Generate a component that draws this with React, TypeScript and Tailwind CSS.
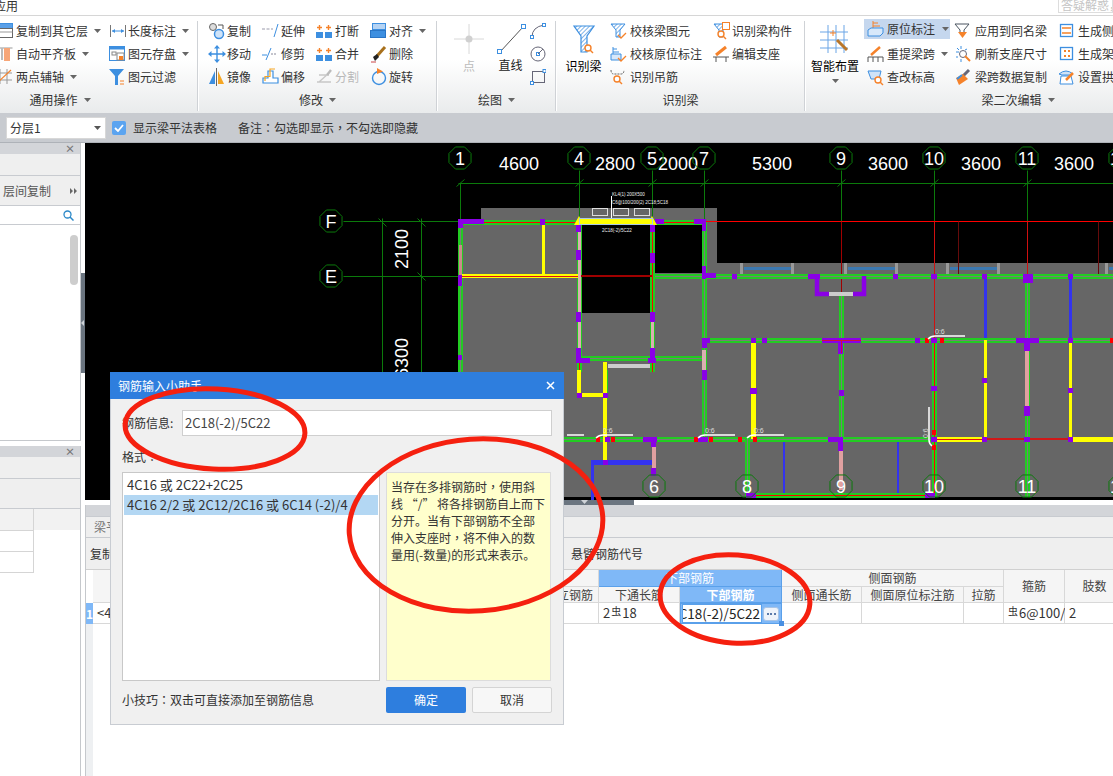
import React from "react";

const B = "#3d8fe0";
const O = "#f5822a";

const S = ({ children, w = 18, h = 18 }: { children: React.ReactNode; w?: number; h?: number }) => (
  <svg width={w} height={h} viewBox={`0 0 ${w} ${h}`} fill="none" className="block shrink-0">
    {children}
  </svg>
);

const Caret = ({ c = "#666" }: { c?: string }) => (
  <svg width="7" height="4" viewBox="0 0 7 4" className="block shrink-0">
    <path d="M0 0H7L3.5 4Z" fill={c} />
  </svg>
);

const P = ({ c }: { c: string }) => <span className="font-['Noto_Sans_CJK_TC']">{c}</span>;

const Funnel = ({ id, small }: { id: string; small?: boolean }) => (
  <>
    <defs>
      <pattern id={id} width="3" height="3" patternUnits="userSpaceOnUse" patternTransform="rotate(-45)">
        <rect width="3" height="3" fill="#fff" />
        <rect width="3" height="1" fill="#7fb2e8" />
      </pattern>
    </defs>
    {small ? (
      <path d="M1 2H15L10 8V15H6V8Z" fill={`url(#${id})`} stroke={B} />
    ) : (
      <path d="M1 1H21L14 11V27H8V11Z" fill={`url(#${id})`} stroke={B} strokeWidth="1.2" />
    )}
  </>
);

const Mag = ({ x, y }: { x: number; y: number }) => (
  <g stroke={O} strokeWidth="1.4">
    <circle cx={x} cy={y} r="3" fill="#fff" />
    <path d={`M${x + 2} ${y + 2}L${x + 5} ${y + 5}`} />
  </g>
);

const Icons: Record<string, React.ReactNode> = {
  copyLayer: (
    <S>
      <rect x="0.5" y="1.5" width="16" height="5" fill="#5aa0e8" stroke={B} />
      <rect x="0.5" y="6.5" width="16" height="9" fill="#fff" stroke="#666" />
      <rect x="0.5" y="9.5" width="16" height="1" fill="#999" />
    </S>
  ),
  align: (
    <S>
      <rect x="0.5" y="2.5" width="16" height="1" fill="#999" />
      <rect x="0.5" y="3" width="3" height="12" fill="#fff" stroke="#777" />
      <rect x="5" y="3" width="2" height="12" fill="#bbb" />
      <rect x="8" y="3" width="6" height="13" fill="#f7a678" />
    </S>
  ),
  axis: (
    <S>
      <path d="M4 1V16M11 1V16M0 5H16M0 12H16" stroke="#999" />
      <path d="M0 16L15 2" stroke={O} strokeWidth="1.2" />
    </S>
  ),
  len: (
    <S>
      <path d="M1.5 3V15M16.5 3V15" stroke="#777" />
      <path d="M3 9H15" stroke={B} />
      <path d="M3 9L6 7V11ZM15 9L12 7V11Z" fill={B} />
    </S>
  ),
  save: (
    <S>
      <rect x="0.5" y="1.5" width="15" height="14" fill="#fff" stroke={B} />
      <rect x="0.5" y="1.5" width="15" height="3" fill={B} />
      <rect x="3" y="7" width="4" height="3" fill="none" stroke="#888" />
      <rect x="8" y="8" width="7" height="7" fill="#fff" stroke="#888" />
      <rect x="10" y="11" width="4" height="4" fill={O} />
    </S>
  ),
  filter: (
    <S>
      <path d="M0 1H15L9 8V17H6V8Z" fill={B} />
      <path d="M11 13H15M11 16H15" stroke={O} strokeWidth="1.2" />
    </S>
  ),
  copy: (
    <S>
      <circle cx="5" cy="5" r="3.5" fill="#ddd" stroke="#666" />
      <circle cx="11" cy="12" r="4.5" fill="#cfe3f8" stroke={B} strokeWidth="1.5" />
      <path d="M10 3H15V7" stroke="#555" />
    </S>
  ),
  extend: (
    <S>
      <path d="M0 7H11" stroke="#99a" strokeDasharray="3 1.5" />
      <path d="M12 15L16 2" stroke={B} />
    </S>
  ),
  brk: (
    <S>
      <rect x="0" y="10" width="7" height="6" fill={B} />
      <rect x="9" y="10" width="7" height="6" fill={B} />
      <path d="M3.5 3V8M1 5.500H6M12.500 3V8M10 5.500H15" stroke={O} strokeWidth="1.4" />
    </S>
  ),
  alignR: (
    <S>
      <rect x="2.500" y="1.500" width="13" height="6" fill="#b5d3f3" stroke={B} />
      <rect x="0.500" y="8.500" width="15" height="7" fill={B} stroke="#2a75c5" />
    </S>
  ),
  move: (
    <S>
      <path d="M2 9H16M9 2V16" stroke={B} strokeWidth="1.4" />
      <path d="M9 0L12 3.500H6ZM9 18L12 14.500H6ZM0 9L3.500 6V12ZM18 9L14.500 6V12Z" fill={B} />
    </S>
  ),
  trim: (
    <S>
      <path d="M0 10H5" stroke={B} />
      <path d="M9 9H15" stroke="#889" strokeDasharray="2 1" />
      <path d="M4 15L9 3" stroke={B} />
    </S>
  ),
  del: (
    <S>
      <path d="M7 11L15 2" stroke="#a8701c" strokeWidth="3" />
      <path d="M3 12L7 9L9 12L5 16Z" fill="#222" />
      <path d="M1 17H6" stroke="#c44" />
    </S>
  ),
  mirror: (
    <S>
      <path d="M7 3V16H1Z" fill={B} />
      <path d="M10 3V16H16Z" fill="#f5a623" />
      <path d="M8.500 0V18" stroke="#666" />
    </S>
  ),
  offset: (
    <S>
      <path d="M1 15V10H6V3H11V10H16V15Z" fill="#fff" stroke={B} strokeWidth="1.2" />
      <path d="M3 13V8.500H8V1H13" stroke="#f5a623" strokeWidth="1.2" />
    </S>
  ),
  split: (
    <S>
      <path d="M1 14L15 14M3 14L13 5M3 7H13" stroke="#c8c8c8" strokeWidth="1.4" />
      <path d="M11 7L15 2" stroke="#bbb" strokeWidth="2.400" />
    </S>
  ),
  rotate: (
    <S>
      <circle cx="9" cy="10" r="6.500" stroke={B} strokeWidth="1.4" />
      <path d="M7 0L13 3.500L7 6Z" fill={O} />
    </S>
  ),
  check1: (
    <S>
      <Funnel id="h1" small />
      <path d="M8 13L11 16L16 11" stroke={O} strokeWidth="1.300" />
    </S>
  ),
  check2: (
    <S>
      <path d="M1 15V9H11V15ZM3 9V2M3 4H7M3 7H9" stroke={B} fill="#d7e8fa" />
      <path d="M8 13L11 16L16 11" stroke={O} strokeWidth="1.300" />
    </S>
  ),
  hang: (
    <S>
      <path d="M1 2Q1 6 4 6H11Q14 6 14 2" stroke="#666" strokeDasharray="2 1" />
      <Mag x={7} y={11} />
    </S>
  ),
  part: (
    <S>
      <Funnel id="h2" small />
      <rect x="9.500" y="0.500" width="7" height="7" fill="#fff" stroke={O} />
      <Mag x={8} y={12} />
    </S>
  ),
  seat: (
    <S>
      <path d="M0 12H16M3 12V17M13 12V17" stroke="#555" />
      <path d="M3 10L13 2" stroke={O} strokeWidth="3" />
    </S>
  ),
  origin: (
    <S>
      <path d="M6 1V9M6 3H11M6 6H13" stroke={O} />
      <path d="M1 10L4 8H16V13L13 16H1Z" fill="#d7e8fa" stroke={B} />
    </S>
  ),
  retake: (
    <S>
      <path d="M1 17V12H16V17M6 12V17M11 12V17" stroke="#555" />
      <path d="M4 10L13 2" stroke={O} strokeWidth="2.500" />
    </S>
  ),
  elev: (
    <S>
      <path d="M1 3H14L12 11H4Z" fill="#cfe3f8" stroke={B} />
      <Mag x={11} y={12} />
    </S>
  ),
  same: (
    <S>
      <path d="M1 2H15L10 8V11H6V8Z" fill="#fff" stroke="#4a5560" />
      <path d="M4 10H13L8.500 16Z" fill={O} />
    </S>
  ),
  refresh: (
    <S>
      <path d="M7 1V4M2 7H5M3 3L5 5M13 4L11 5M7 14V17M2 12H4" stroke={B} />
      <circle cx="9" cy="9" r="3.500" fill="#fff" stroke="#667" />
      <path d="M11 11L16 16" stroke={O} strokeWidth="2" />
    </S>
  ),
  span: (
    <S>
      <path d="M9 8L15 2" stroke="#667" strokeWidth="3" />
      <path d="M2 10L9 6L14 11L5 17Z" fill={O} />
      <path d="M3 11L8 7" stroke={B} strokeWidth="2" />
    </S>
  ),
  gen1: (
    <S>
      <rect x="1.500" y="2.500" width="12" height="12" fill="#fff" stroke={B} strokeWidth="1.300" />
      <path d="M3 6H12M3 11H12" stroke={O} strokeWidth="1.300" />
    </S>
  ),
  gen2: (
    <S>
      <rect x="1.500" y="2.500" width="12" height="12" fill="#fff" stroke={B} strokeWidth="1.300" />
      <path d="M5 5H7V7H5ZM9 5H11V7H9ZM5 10H7V12H5ZM9 10H11V12H9Z" fill={O} />
    </S>
  ),
  phone: (
    <S>
      <path d="M0 6Q7 0 14 6L11 7H3Z" fill="#cfe3f8" stroke={B} />
      <path d="M2 8H12L14 16H1Z" fill="#fff" stroke={B} />
      <path d="M7 12L14 5" stroke={O} strokeWidth="2.500" />
    </S>
  ),
};

const Item = ({
  icon,
  label,
  arrow,
  iw = "w-[19px]",
  gray,
}: {
  icon: string;
  label: string;
  arrow?: boolean;
  iw?: string;
  gray?: boolean;
}) => (
  <div className="flex h-[23px] items-center whitespace-nowrap">
    <div className={`${iw} shrink-0`}>{Icons[icon]}</div>
    <span className={gray ? "text-[#b9b9b9]" : "text-[#333]"}>{label}</span>
    {arrow && (
      <span className="ml-[6px]">
        <Caret />
      </span>
    )}
  </div>
);

const GroupLabel = ({ label, arrow, cls = "" }: { label: string; arrow?: boolean; cls?: string }) => (
  <div className={`flex h-[24px] items-center justify-center gap-[6px] text-[#333] ${cls}`}>
    <span>{label}</span>
    {arrow && <Caret />}
  </div>
);

const Sep = () => <div className="my-[2px] w-[2px] shrink-0 border-l border-[#cfd2d6] bg-white" />;

const Ribbon = () => (
  <div className="flex h-[97px] shrink-0 overflow-hidden bg-linear-to-b from-white from-45% to-[#e9ebec] pt-[3px] text-[12px] shadow-[0_1px_2px_rgba(0,0,0,0.35)]">
    <div className="flex w-[197px] shrink-0 flex-col">
      <div className="-ml-[4px] flex h-[69px]">
        <div className="w-[113px]">
          <Item icon="copyLayer" iw="w-[20px]" label="复制到其它层" arrow />
          <Item icon="align" iw="w-[20px]" label="自动平齐板" arrow />
          <Item icon="axis" iw="w-[20px]" label="两点辅轴" arrow />
        </div>
        <div>
          <Item icon="len" label="长度标注" arrow />
          <Item icon="save" label="图元存盘" arrow />
          <Item icon="filter" label="图元过滤" />
        </div>
      </div>
      <GroupLabel label="通用操作" arrow cls="pr-[77px]" />
    </div>
    <Sep />
    <div className="flex w-[237px] shrink-0 flex-col">
      <div className="flex h-[69px] pl-[9px]">
        <div className="w-[54px]">
          <Item icon="copy" label="复制" />
          <Item icon="move" label="移动" />
          <Item icon="mirror" label="镜像" />
        </div>
        <div className="w-[54px]">
          <Item icon="extend" label="延伸" />
          <Item icon="trim" label="修剪" />
          <Item icon="offset" label="偏移" />
        </div>
        <div className="w-[54px]">
          <Item icon="brk" label="打断" />
          <Item icon="brk" label="合并" />
          <Item icon="split" label="分割" gray />
        </div>
        <div>
          <Item icon="alignR" label="对齐" arrow />
          <Item icon="del" label="删除" />
          <Item icon="rotate" label="旋转" />
        </div>
      </div>
      <GroupLabel label="修改" arrow />
    </div>
    <Sep />
    <div className="flex w-[117px] shrink-0 flex-col">
      <div className="flex h-[69px] pl-[9px]">
        <div className="flex w-[44px] flex-col items-center pt-[5px]">
          <S w={30} h={32}>
            <path d="M15 0V30M0 15H30" stroke="#d8d8d8" />
            <circle cx="15" cy="15" r="3.500" fill="#d0d0d0" />
          </S>
          <span className="mt-[3px] leading-[14px] text-[#bbb]">点</span>
        </div>
        <div className="flex w-[39px] flex-col items-center pt-[3px]">
          <S w={30} h={32}>
            <path d="M4 30L27 5" stroke="#555" />
            <rect x="1.500" y="27.500" width="4" height="4" fill="#fff" stroke={B} />
            <rect x="25.500" y="2.500" width="4" height="4" fill="#fff" stroke={B} />
          </S>
          <span className="mt-[4px] leading-[14px] text-[#222]">直线</span>
        </div>
        <div className="flex flex-col">
          <div className="flex h-[23px] items-center">
            <S w={16} h={16}>
              <path d="M2 14Q2 4 14 2" stroke="#667" />
              <rect x="0.500" y="12.500" width="3" height="3" fill="#fff" stroke={B} />
              <rect x="12.500" y="0.500" width="3" height="3" fill="#fff" stroke={B} />
            </S>
          </div>
          <div className="flex h-[23px] items-center">
            <S w={16} h={16}>
              <circle cx="8" cy="8" r="7" stroke="#667" />
              <rect x="6.500" y="6.500" width="3" height="3" fill="#fff" stroke={B} />
              <path d="M8 8L13 3" stroke="#667" />
            </S>
          </div>
          <div className="flex h-[23px] items-center">
            <S w={16} h={16}>
              <rect x="2.500" y="2.500" width="12" height="11" stroke="#667" />
              <rect x="0.500" y="12.500" width="3" height="3" fill="#fff" stroke={B} />
              <rect x="13" y="0.500" width="3" height="3" fill="#fff" stroke={B} />
            </S>
          </div>
        </div>
      </div>
      <GroupLabel label="绘图" arrow />
    </div>
    <Sep />
    <div className="flex w-[247px] shrink-0 flex-col">
      <div className="flex h-[69px]">
        <div className="flex w-[53px] flex-col items-center pt-[6px]">
          <S w={26} h={30}>
            <g transform="translate(2,0)">
              <Funnel id="h3" />
            </g>
            <Mag x={17} y={23} />
          </S>
          <span className="mt-[4px] leading-[14px]">识别梁</span>
        </div>
        <div className="w-[103px]">
          <Item icon="check1" iw="w-[20px]" label="校核梁图元" />
          <Item icon="check2" iw="w-[20px]" label="校核原位标注" />
          <Item icon="hang" iw="w-[20px]" label="识别吊筋" />
        </div>
        <div>
          <Item icon="part" label="识别梁构件" />
          <Item icon="seat" label="编辑支座" />
        </div>
      </div>
      <GroupLabel label="识别梁" />
    </div>
    <Sep />
    <div className="flex w-[424px] shrink-0 flex-col">
      <div className="flex h-[69px]">
        <div className="flex w-[58px] flex-col items-center pt-[6px]">
          <S w={30} h={30}>
            <path d="M0 7H28M0 15H28M0 23H28M8 0V28M16 0V28M24 0V28" stroke="#6aa5e6" />
            <path d="M17 15L27 25" stroke="#b9762a" strokeWidth="3" />
            <path d="M10 8H16M13 5V11" stroke={O} />
          </S>
          <span className="mt-[4px] leading-[14px] whitespace-nowrap">智能布置</span>
          <span className="mt-[6px]">
            <Caret />
          </span>
        </div>
        <div className="w-[90px]">
          <div className="flex h-[20px] w-[86px] items-center bg-[#c5d7ee] pl-[3px] whitespace-nowrap">
            <div className="w-[20px] shrink-0">{Icons.origin}</div>
            <span className="text-[#333]">原位标注</span>
            <span className="ml-[7px]">
              <Caret />
            </span>
          </div>
          <div className="mt-[3px] pl-[3px]">
            <Item icon="retake" iw="w-[20px]" label="重提梁跨" arrow />
            <Item icon="elev" iw="w-[20px]" label="查改标高" />
          </div>
        </div>
        <div className="w-[105px]">
          <Item icon="same" iw="w-[21px]" label="应用到同名梁" />
          <Item icon="refresh" iw="w-[21px]" label="刷新支座尺寸" />
          <Item icon="span" iw="w-[21px]" label="梁跨数据复制" />
        </div>
        <div className="w-[120px]">
          <Item icon="gen1" label="生成侧面钢筋" />
          <Item icon="gen2" label="生成架立钢筋" />
          <Item icon="phone" label="设置拱梁" />
        </div>
      </div>
      <GroupLabel label="梁二次编辑" arrow />
    </div>
  </div>
);

/* ---------- CAD drawing ---------- */
const GD = "#0b7a0b";
const PUR = "#8a00e6";

type L = [number, number, number, number];
const bar = (a: L, c: string, w: number, k: string) => {
  const off = Math.floor(w / 2);
  return a[1] === a[3] ? (
    <rect key={k} x={a[0]} y={a[1] - off} width={a[2] - a[0]} height={w} fill={c} />
  ) : (
    <rect key={k} x={a[0] - off} y={a[1]} width={w} height={a[3] - a[1]} fill={c} />
  );
};
const beam = (a: L, red: boolean, k: string) => (
  <g key={k}>
    {bar(a, "#22cc22", 5, "o")}
    {bar(a, red ? "#f00" : "#7a7a7a", 1, "i")}
  </g>
);
const seg = bar;

const greenBeams: [L, boolean][] = [
  [[458, 222, 579, 222], true],
  [[652, 222, 704, 222], true],
  [[652, 276, 704, 276], false],
  [[460, 222, 460, 372], false],
  [[579, 222, 579, 372], true],
  [[652, 222, 652, 372], true],
  [[704, 222, 704, 440], false],
  [[704, 276, 1113, 276], false],
  [[704, 340, 1113, 340], false],
  [[579, 358, 704, 358], false],
  [[564, 439, 934, 439], false],
  [[841, 296, 841, 439], false],
  [[934, 340, 934, 497], true],
  [[1027, 280, 1027, 497], false],
  [[747, 439, 747, 497], false],
  [[750, 495, 934, 495], true],
  [[605, 370, 605, 400], false],
];
const purple: [number, number, number, number][] = [
  [458, 219, 26, 5], [458, 219, 5, 9], [458, 275, 4, 11], [458, 355, 4, 5], [540, 219, 5, 6],
  [576, 224, 5, 8], [576, 250, 5, 10], [576, 312, 5, 10], [576, 348, 5, 14], [576, 358, 14, 5],
  [650, 224, 5, 8], [650, 253, 5, 10], [650, 312, 5, 10], [648, 358, 8, 5], [650, 348, 5, 10],
  [655, 219, 9, 5], [694, 219, 12, 5], [702, 222, 4, 9], [702, 266, 4, 13], [702, 273, 14, 5],
  [702, 338, 8, 5], [702, 338, 5, 10], [702, 370, 5, 10], [732, 274, 5, 5], [808, 274, 12, 5],
  [893, 274, 5, 5], [931, 274, 6, 5], [982, 274, 5, 5], [1023, 274, 10, 9], [1068, 274, 5, 5],
  [751, 338, 5, 5], [762, 338, 5, 5], [822, 338, 39, 5], [838, 338, 5, 16], [839, 390, 5, 6],
  [915, 338, 5, 5], [931, 338, 6, 5], [931, 386, 6, 5], [1016, 338, 23, 5], [1024, 338, 6, 13],
  [1024, 406, 6, 10], [982, 378, 5, 5], [1068, 338, 5, 5], [1068, 388, 5, 5], [750, 388, 7, 6],
  [828, 437, 15, 5], [838, 437, 5, 14], [931, 437, 6, 5], [982, 437, 5, 5], [1024, 437, 6, 5],
  [1068, 437, 5, 5], [643, 437, 14, 5], [651, 437, 5, 10], [651, 468, 5, 8], [698, 437, 10, 5],
  [605, 437, 5, 5], [603, 460, 5, 5], [577, 393, 5, 5], [603, 393, 5, 5], [746, 493, 10, 5], [925, 493, 10, 5],
];
const redSq: [number, number][] = [
  [598, 439], [613, 439], [696, 439], [711, 439], [740, 439], [755, 439], [927, 340], [942, 340], [934, 432], [934, 447], [1112, 340],
];
const Octa = ({ x, y, t }: { x: number; y: number; t: string }) => {
  const r = 12;
  const a = r * 0.92;
  const b = r * 0.38;
  return (
    <g>
      <polygon
        points={`${x - b},${y - a} ${x + b},${y - a} ${x + a},${y - b} ${x + a},${y + b} ${x + b},${y + a} ${x - b},${y + a} ${x - a},${y + b} ${x - a},${y - b}`}
        fill="none"
        stroke={GD}
      />
      <text x={x} y={y + 6.500} textAnchor="middle" fontSize="18" fill="#fff" fontFamily="'Liberation Sans', sans-serif">
        {t}
      </text>
    </g>
  );
};
const Lbl = ({ x, y }: { x: number; y: number }) => (
  <g>
    <path d={`M${x - 5} ${y + 3}Q${x - 2} ${y} ${x + 2} ${y}H${x + 32}`} stroke="#fff" strokeWidth="1.500" fill="none" />
    <text x={x + 2} y={y - 2} fontSize="7" fill="#ddd" fontFamily="'Liberation Sans', sans-serif">
      0:6
    </text>
  </g>
);

const Cad = () => (
  <svg width="1028" height="357" viewBox="85 143 1028 357" className="block shrink-0 bg-black">
    <path d="M481 208H717V263H1113V497H458V221H481Z" fill="#666" />
    <rect x="582" y="224" width="69" height="89" fill="#000" />
    <rect x="655" y="224" width="47" height="49" fill="#000" />
    {[844, 948, 1050].map((x) => (
      <g key={x}>
        <rect x={x - 104} y="263" width="3" height="11" fill="#999" />
        <rect x={x - 53} y="263" width="3" height="11" fill="#999" />
        <rect x={x - 100} y="267" width="47" height="3" fill="#3b78b0" />
      </g>
    ))}
    <rect x="1105" y="263" width="3" height="11" fill="#999" />
    <rect x="1109" y="267" width="4" height="3" fill="#3b78b0" />
    <g transform="translate(0.5,0.5)">
      <path d="M460 183V222M579 170V222M652 170V222M704 170V222M841 170V221M934 170V221M1027 170V221" stroke={GD} />
      <path d="M458 183H1113" stroke={GD} />
      <path d="M343 221H460M343 276H460" stroke={GD} />
      <path d="M382 218V375M421 218V375" stroke={GD} />
      <path d="M378 218L386 226M417 218L425 226M417 272L425 280M456 186L464 179M575 186L583 179M648 186L656 179M700 186L708 179M837 186L845 179M930 186L938 179M1023 186L1031 179" stroke={GD} />
      <path d="M704 221H1113" stroke="#f00" />
      <path d="M841 221V296" stroke="#a00000" />
      <path d="M934 221V340M1027 221V274" stroke="#d01010" />
      <path d="M958 221V275M1098 221V275" stroke="#660b0b" />
    </g>

    {[985, 1070].map((x) => seg([x, 276, x, 340], "#3333ee", 3, `b${x}`))}
    {[784, 898].map((x) => seg([x, 439, x, 497], "#3333ee", 2, `c${x}`))}
    {greenBeams.map((b, i) => beam(b[0], b[1], `g${i}`))}
    {seg([579, 276, 652, 276], "#a00000", 2, "dr")}
    {seg([460, 276, 579, 276], "#ffff00", 4, "y1")}
    {seg([460, 276, 579, 276], "#e01010", 1, "y1r")}
    {seg([543, 222, 543, 276], "#ffff00", 3, "y2")}
    {seg([753, 340, 753, 439], "#ffff00", 5, "y3")}
    {seg([985, 340, 985, 439], "#ffff00", 3, "y4")}
    {seg([1070, 340, 1070, 439], "#ffff00", 3, "y5")}
    {seg([934, 439, 985, 439], "#ffff00", 5, "y6")}
    {seg([1072, 439, 1113, 439], "#ffff00", 5, "y7")}
    {seg([985, 439, 1072, 439], "#d01818", 2, "y8")}
    {seg([934, 439, 985, 439], "#e01010", 1, "y9")}
    {seg([579, 370, 579, 395], "#ffff00", 4, "y10")}
    {seg([579, 395, 605, 395], "#ffff00", 4, "y11")}
    {seg([605, 362, 605, 462], "#ffff00", 4, "y12")}
    {seg([591, 462, 654, 462], "#3333ee", 5, "bl")}
    {seg([592, 462, 592, 500], "#3333ee", 3, "bl2")}
    {seg([460, 245, 460, 275], "#c98a8a", 3, "pk0")}
    {seg([579, 232, 579, 312], "#d9b0b0", 3, "pk1")}
    {seg([652, 322, 652, 348], "#d9b0b0", 3, "pk2")}
    {seg([579, 322, 579, 348], "#d9b0b0", 3, "pk3")}
    {seg([1027, 351, 1027, 406], "#e0a0a0", 4, "pk4")}
    {seg([841, 450, 841, 490], "#e0a0a0", 4, "pk5")}
    {seg([654, 447, 654, 468], "#e0a0a0", 4, "pk6")}
    {seg([704, 350, 704, 370], "#d9b0b0", 4, "pk7")}
    {seg([608, 366, 650, 366], "#ccc", 4, "gy")}
    <path d="M817 276V294H829M864 276V294H853" stroke={PUR} strokeWidth="4.500" fill="none" />
    <rect x="829" y="292" width="24" height="4" fill="#ccc" />
    {purple.map((p, i) => (
      <rect key={i} x={p[0]} y={p[1]} width={p[2]} height={p[3]} fill={PUR} />
    ))}
    <rect x="822" y="340" width="39" height="1" fill="#d0103a" />
    <rect x="841" y="340" width="1" height="13" fill="#d0103a" />
    <path d="M574 225L579 216L584 225ZM647 225L652 216L657 225Z" fill="#ffff00" />
    <rect x="579.500" y="218.500" width="73" height="6" fill="#ffff00" stroke="#a8c8e8" />
    {redSq.map((p, i) => (
      <rect key={i} x={p[0] - 2} y={p[1] - 2} width="4" height="5" fill="#f00" />
    ))}
    <g fill="none" stroke="#ddd">
      <rect x="592.500" y="208.500" width="15" height="7" />
      <rect x="613.500" y="208.500" width="15" height="7" />
      <rect x="634.500" y="208.500" width="15" height="7" />
    </g>
    <path d="M611.500 196V218" stroke="#fff" />
    <g fontFamily="'Liberation Sans', sans-serif" fill="#eee" fontSize="4.500">
      <text x="612" y="196">KL4(1) 200X500</text>
      <text x="612" y="204">C6@100/200(2) 2C18;5C18</text>
      <text x="602" y="232">2C18(-2)/5C22</text>
    </g>
    <Lbl x={601} y={435} />
    <Lbl x={703} y={435} />
    <Lbl x={752} y={435} />
    <Lbl x={933} y={336} />
    <path d="M929 407V440Q929 444 932 446" stroke="#fff" strokeWidth="1.500" fill="none" />
    <text transform="translate(928,438) rotate(-90)" fontSize="7" fill="#ddd" fontFamily="'Liberation Sans', sans-serif">
      0:6
    </text>
    <path d="M567 435H584" stroke="#fff" strokeWidth="1.500" />

    <g fontFamily="'Liberation Sans', sans-serif" fontSize="18" fill="#fff" textAnchor="middle">
      <text x="519" y="170">4600</text>
      <text x="615" y="170">2800</text>
      <text x="678" y="170">2000</text>
      <text x="772" y="170">5300</text>
      <text x="888" y="170">3600</text>
      <text x="981" y="170">3600</text>
      <text x="1074" y="170">3600</text>
      <text transform="translate(408,249) rotate(-90)">2100</text>
      <text transform="translate(408,358) rotate(-90)">6300</text>
    </g>
    <Octa x={460} y={158} t="1" />
    <Octa x={579} y={158} t="4" />
    <Octa x={652} y={158} t="5" />
    <Octa x={704} y={158} t="7" />
    <Octa x={841} y={158} t="9" />
    <Octa x={934} y={158} t="10" />
    <Octa x={1027} y={158} t="11" />
    <Octa x={1120} y={158} t="12" />
    <Octa x={331} y={221} t="F" />
    <Octa x={331} y={276} t="E" />
    <Octa x={654} y={486} t="6" />
    <Octa x={747} y={486} t="8" />
    <Octa x={841} y={486} t="9" />
    <Octa x={934} y={486} t="10" />
    <Octa x={1027} y={486} t="11" />
    <Octa x={1120} y={486} t="12" />
  </svg>
);

/* ---------- panels ---------- */
const TitleBar = () => (
  <div className="flex h-[11px] items-center justify-end bg-[#d3d5d9] pr-[5px] text-[10px] leading-none font-bold text-[#777]">
    ×
  </div>
);

const LeftPanel = () => (
  <div className="flex w-[81px] shrink-0 flex-col text-[12px]">
    <div className="flex h-[298px] flex-col border-r border-b border-[#c5c8cc] bg-white">
      <TitleBar />
      <div className="h-[22px] border-b border-[#c8cbd0] bg-[#efefef]" />
      <div className="flex h-[30px] items-center justify-between border-b border-[#c8cbd0] bg-[#efefef] pr-[2px] pl-[3px] text-[#555]">
        <span>层间复制</span>
        <span className="flex">
          <svg width="8" height="6" viewBox="0 0 8 6">
            <path d="M0 0L3 3L0 6ZM4 0L7 3L4 6Z" fill="#666" />
          </svg>
        </span>
      </div>
      <div className="flex h-[19px] items-center justify-end border-b border-[#c8cbd0] pr-[6px]">
        <svg width="11" height="11" viewBox="0 0 11 11" fill="none">
          <circle cx="4.500" cy="4.500" r="3.500" stroke="#2b88c8" strokeWidth="1.300" />
          <path d="M7 7L10.500 10.500" stroke="#2b88c8" strokeWidth="1.500" />
        </svg>
      </div>
      <div className="flex justify-end pt-[10px] pr-[2px]">
        <div className="h-[50px] w-[8px] rounded-[4px] bg-[#cdcdcd]" />
      </div>
    </div>
    <div className="h-[5px]" />
    <div className="flex flex-1 flex-col border-r border-[#c5c8cc] bg-white">
      <TitleBar />
      <div className="h-[22px] border-b border-[#c8cbd0] bg-[#efefef]" />
      <div className="h-[30px] border-b border-[#c8cbd0] bg-[#efefef]" />
      <div className="flex h-[21px] bg-[#f2f2f2]">
        <div className="w-[34px] border-r border-[#d5d5d5]" />
      </div>
      <div className="h-[21px] w-[34px] border-t border-r border-[#d5d5d5]" />
      <div className="h-[22px] w-[34px] border-t border-r border-b border-[#d5d5d5]" />
    </div>
  </div>
);

const Splitter = () => (
  <div className="w-[4px] shrink-0 bg-white">
    <div className="mt-[130px] flex h-[100px] items-center bg-[#6b7580]">
      <svg width="3" height="6" viewBox="0 0 3 6">
        <path d="M3 0V6L0 3Z" fill="#cfd3d8" />
      </svg>
    </div>
  </div>
);

const th = "flex items-center justify-center border-r border-b border-[#d8d8d8] bg-[#f5f5f5] text-[#444]";
const blueH = "flex items-center justify-center border-r border-b border-[#5aa0ea] bg-[#7fb8f7] text-white";
const td = "flex items-center border-r border-b border-[#d8d8d8] bg-white text-[13px] text-[#333]";

const Grade = () => <span className="relative -top-[3px] px-[1px] text-[10px]">虫</span>;

const BeamTable = () => (
  <div className="grid grid-cols-[7px_447px_59px_81px_102px_80px_102px_40px_61px_60px] grid-rows-[17px_16px_21px] border-t border-[#d0d0d0] text-[12px]">
    <div className="row-span-2 bg-white" />
    <div className={`${th} row-span-2`} />
    <div className={th} />
    <div className={`${blueH} col-span-2`}>下部钢筋</div>
    <div className={`${th} col-span-3`}>侧面钢筋</div>
    <div className={`${th} row-span-2`}>箍筋</div>
    <div className={`${th} row-span-2`}>肢数</div>
    <div className={th}>架立钢筋</div>
    <div className={th}>下通长筋</div>
    <div className={`${blueH} font-bold`}>下部钢筋</div>
    <div className={th}>侧面通长筋</div>
    <div className={th}>侧面原位标注筋</div>
    <div className={th}>拉筋</div>
    <div className="flex items-center justify-center bg-[#7fb8f7] text-[12px] font-bold text-white">1</div>
    <div className={`${td} pl-[4px]`}>&lt;4</div>
    <div className={td} />
    <div className={`${td} pl-[4px] whitespace-nowrap`}>
      2<Grade />18
    </div>
    <div className="relative flex items-center border border-[#5aa0ea] bg-[#7fb8f7] pr-[3px] pl-[1px]">
      <div className="flex h-[19px] w-[80px] shrink-0 items-center justify-end overflow-hidden border border-[#5aa0ea] bg-white text-[13.5px] text-[#222]">
        <span className="pr-[1px] whitespace-nowrap">2C18(-2)/5C22</span>
      </div>
      <div className="ml-[1px] flex h-[14px] w-[16px] shrink-0 items-center justify-center gap-[1.5px] rounded-[3px] border border-[#a8c4e6] bg-[#eef3fa]">
        <span className="h-[2px] w-[2px] bg-[#5a7aaa]" />
        <span className="h-[2px] w-[2px] bg-[#5a7aaa]" />
        <span className="h-[2px] w-[2px] bg-[#5a7aaa]" />
      </div>
      <div className="absolute -right-[3px] -bottom-[3px] h-[5px] w-[5px] bg-[#4a90e2]" />
    </div>
    <div className={td} />
    <div className={td} />
    <div className={td} />
    <div className={`${td} pl-[3px] whitespace-nowrap`}>
      <Grade />6@100/
    </div>
    <div className={`${td} pl-[4px]`}>2</div>
  </div>
);

const Bottom = () => (
  <div className="flex flex-1 flex-col border-l border-[#c5c8cc] bg-white text-[12px]">
    <div className="h-[12px] border-b border-[#c8cbd0] bg-[#d3d5d9]" />
    <div className="flex h-[21px] items-center border-b border-[#c8cbd0] bg-[#efefef] pl-[8px] text-[#777]">
      梁平法表格
    </div>
    <div className="flex h-[31px] items-center justify-between bg-[#efefef] pr-[470px] pl-[4px] whitespace-nowrap text-[#333]">
      <span>复制跨数据</span>
      <span>悬臂钢筋代号</span>
    </div>
    <BeamTable />
    <div className="w-[7px] flex-1 bg-[#eef0f2]" />
  </div>
);

const Dialog = () => (
  <div className="absolute top-[372px] left-[110px] flex h-[353px] w-[454px] flex-col border border-t-0 border-[#c8ccd2] bg-[#f0f0f0] text-[12px] text-[#333]">
    <div className="-mx-[1px] flex h-[27px] shrink-0 items-center justify-between bg-[#2e7ede] pr-[9px] pl-[8px] text-white">
      <span>钢筋输入小助手</span>
      <svg width="9" height="9" viewBox="0 0 9 9">
        <path d="M1 1L8 8M8 1L1 8" stroke="#fff" strokeWidth="1.500" />
      </svg>
    </div>
    <div className="flex flex-1 flex-col px-[11px]">
      <div className="mt-[11px] flex items-center">
        <span className="w-[60px] shrink-0">钢筋信息:</span>
        <div className="flex h-[26px] w-[370px] items-center border border-[#cfcfcf] bg-white pl-[2px] text-[13px] text-[#444]">
          2C18(-2)/5C22
        </div>
      </div>
      <div className="mt-[13px] h-[16px] leading-[16px]">
        格式<P c="：" />
      </div>
      <div className="mt-[7px] flex h-[209px] gap-[6px]">
        <div className="w-[258px] border border-[#c8c8c8] bg-white p-[1px] text-[13px]">
          <div className="flex h-[21px] items-center pl-[3px]">4C16 或 2C22+2C25</div>
          <div className="flex h-[20px] items-center bg-[#b3d7f3] pl-[3px] whitespace-nowrap">
            4C16 2/2 或 2C12/2C16 或 6C14 (-2)/4
          </div>
        </div>
        <div className="w-[165px] border border-[#dcdcdc] bg-[#ffffcc] pt-[5px] pl-[4px] leading-[17px] whitespace-nowrap">
          <div>
            当存在多排钢筋时<P c="，" />使用斜
          </div>
          <div>线 “/” 将各排钢筋自上而下</div>
          <div>分开。当有下部钢筋不全部</div>
          <div>
            伸入支座时<P c="，" />将不伸入的数
          </div>
          <div>量用(-数量)的形式来表示。</div>
        </div>
      </div>
      <div className="mt-[6px] flex h-[26px] items-center gap-[6px]">
        <span className="flex-1">
          小技巧<P c="：" />双击可直接添加至钢筋信息
        </span>
        <div className="flex h-[26px] w-[80px] items-center justify-center rounded-[2px] bg-[#2e7ede] text-white">确定</div>
        <div className="flex h-[26px] w-[80px] items-center justify-center rounded-[2px] border border-[#d4d4d4] bg-[#f7f7f7]">取消</div>
      </div>
    </div>
  </div>
);

export default function App() {
  return (
    <div
      className="relative flex h-[776px] w-[1113px] flex-col overflow-hidden bg-white text-[12px]"
      style={{ fontFamily: "'Noto Sans CJK SC', 'Noto Sans', sans-serif" }}
    >
      <div className="flex h-[16px] shrink-0 items-start justify-between overflow-hidden border-b border-[#dcdcdc] bg-white">
        <span className="-mt-[4px] -ml-[6px] text-[12px] leading-[20px] text-[#333]">应用</span>
        <div className="-mt-[3px] h-[16px] w-[55px] overflow-hidden border border-[#ddd] pl-[2px] text-[12px] leading-[14px] whitespace-nowrap text-[#c4c4c4]">
          答疑解惑，
        </div>
      </div>
      <Ribbon />
      <div className="relative flex h-[29px] shrink-0 items-center bg-[#c8cbd0] pl-[6px] text-[12px] text-[#333]">
        <div className="flex h-[22px] w-[100px] items-center justify-between border border-[#d8d8d8] bg-white pr-[4px] pl-[3px]">
          <span>分层1</span>
          <Caret c="#555" />
        </div>
        <div className="ml-[6px] flex h-[14px] w-[14px] items-center justify-center rounded-[2px] bg-[#5ba4f0]">
          <svg width="10" height="8" viewBox="0 0 10 8" fill="none">
            <path d="M1 4L4 7L9 1" stroke="#fff" strokeWidth="1.800" />
          </svg>
        </div>
        <span className="ml-[7px]">显示梁平法表格</span>
        <span className="ml-[21px]">
          备注<P c="：" />勾选即显示<P c="，" />不勾选即隐藏
        </span>
      </div>
      <div className="flex min-h-0 flex-1 border-t border-[#aeb2b8]">
        <LeftPanel />
        <Splitter />
        <div className="flex min-w-0 flex-1 flex-col">
          <Cad />
          <div className="flex h-[5px] shrink-0 justify-center bg-white">
            <div className="-ml-[30px] flex h-[5px] w-[100px] items-start justify-center bg-[#6b7580]">
              <Caret c="#cfd3d8" />
            </div>
          </div>
          <Bottom />
        </div>
      </div>
      <Dialog />
      <svg className="pointer-events-none absolute inset-0" width="1113" height="776" fill="none" stroke="#f5200f" strokeWidth="5">
        <ellipse cx="215" cy="429" rx="90" ry="40" transform="rotate(3 215 429)" />
        <ellipse cx="476" cy="525" rx="127" ry="86" transform="rotate(-4 476 525)" />
        <ellipse cx="735" cy="599" rx="75" ry="44" transform="rotate(4 735 599)" />
      </svg>
    </div>
  );
}
